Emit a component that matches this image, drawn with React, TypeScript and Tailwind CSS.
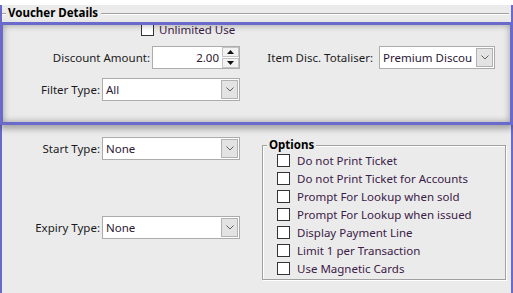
import React from 'react';

const Chevron = () => (
  <svg width="8" height="5" viewBox="0 0 8 5">
    <polyline points="0.5,0.5 4,4 7.5,0.5" fill="none" stroke="#606060" strokeWidth="1" />
  </svg>
);

function Combo({ value, className }: { value: string; className: string }) {
  return (
    <div className={`flex items-center h-[23px] bg-white border border-[#acacac] ${className}`}>
      <span className="flex-1 pl-[3px] whitespace-nowrap text-[#2c1834]">{value}</span>
      <div className="w-[17px] h-[19px] mr-[1px] ml-[2px] shrink-0 flex items-center justify-center bg-[#e3e3e3] border border-[#b2b2b2]">
        <Chevron />
      </div>
    </div>
  );
}

function Check({ label }: { label: string }) {
  return (
    <div className="flex items-center h-[18px] gap-[7px]">
      <span className="w-[13px] h-[13px] self-start mt-[2px] bg-white border border-[#333] shrink-0" />
      <span className="text-[#3a2046] whitespace-nowrap">{label}</span>
    </div>
  );
}

const options = [
  'Do not Print Ticket',
  'Do not Print Ticket for Accounts',
  'Prompt For Lookup when sold',
  'Prompt For Lookup when issued',
  'Display Payment Line',
  'Limit 1 per Transaction',
  'Use Magnetic Cards',
];

export default function App() {
  return (
    <div className="relative w-[513px] h-[293px] bg-[#ebebeb] border-x-2 border-b-2 border-[#6a6acd] text-[11.5px] text-[#1b1b1b] font-['Noto_Sans',sans-serif]">
      {/* group header */}
      <div className="flex items-center h-[16px] mt-[5px]">
        <span className="w-[4px] h-[2px] mt-[2px] border-t border-[#a0a0a0] bg-white" />
        <span className="ml-[2px] font-bold text-black leading-[16px]">Voucher Details</span>
        <span className="flex-1 h-[2px] mt-[2px] ml-[3px] mr-[2px] border-t border-[#a0a0a0] bg-white" />
      </div>

      {/* highlighted section */}
      <div className="flex items-center h-[15px] mt-[1px] pl-[139px] gap-[5px]">
        <span className="w-[13px] h-[13px] bg-white border border-[#333]" />
        <span className="text-[#3a2046]">Unlimited Use</span>
      </div>

      <div className="flex items-center h-[23px] mt-[9px]">
        <span className="w-[148px] text-right">Discount Amount:</span>
        <div className="ml-[2px] w-[88px] h-[23px] flex items-center bg-white border border-[#acacac]">
          <span className="flex-1 text-right pr-[3px] text-[#2c1834]">2.00</span>
          <div className="flex flex-col gap-[1px] w-[17px] h-[21px]">
            <div className="h-[10px] flex items-center justify-center bg-[#f2f2f2] border border-[#c4c4c4]">
              <svg width="7" height="4" viewBox="0 0 7 4"><polygon points="0,4 3.5,0 7,4" fill="#111" /></svg>
            </div>
            <div className="h-[10px] flex items-center justify-center bg-[#f2f2f2] border border-[#c4c4c4]">
              <svg width="7" height="4" viewBox="0 0 7 4"><polygon points="0,0 3.5,4 7,0" fill="#111" /></svg>
            </div>
          </div>
        </div>
        <span className="w-[133px] text-right">Item Disc. Totaliser:</span>
        <Combo value="Premium Discou" className="ml-[6px] w-[116px]" />
      </div>

      <div className="flex items-center h-[23px] mt-[9px]">
        <span className="w-[98px] text-right">Filter Type:</span>
        <Combo value="All" className="ml-[2px] w-[138px]" />
      </div>

      {/* lower section */}
      <div className="flex mt-[36px]">
        <div className="w-[260px]">
          <div className="flex items-center h-[23px]">
            <span className="w-[98px] text-right">Start Type:</span>
            <Combo value="None" className="ml-[2px] w-[138px]" />
          </div>
          <div className="flex items-center h-[23px] mt-[56px]">
            <span className="w-[98px] text-right">Expiry Type:</span>
            <Combo value="None" className="ml-[2px] w-[138px]" />
          </div>
        </div>
        <fieldset className="w-[244px] border border-[#a0a0a0] pb-[1px] shadow-[1px_1px_0_#fff,inset_1px_1px_0_#fff]">
          <legend className="ml-[4px] px-[2px] font-bold text-black leading-[16px] bg-[#ebebeb]">Options</legend>
          <div className="pl-[14px] -mt-[1px]">
            {options.map((o) => (
              <Check key={o} label={o} />
            ))}
          </div>
        </fieldset>
      </div>

      {/* highlight annotation */}
      <div className="absolute -left-[2px] -right-[2px] top-[17px] h-[103px] border-[3px] border-[#6a6acd] pointer-events-none shadow-[inset_0_0_7px_rgba(0,0,0,0.35),0_4px_6px_rgba(0,0,0,0.3)]" />
    </div>
  );
}
